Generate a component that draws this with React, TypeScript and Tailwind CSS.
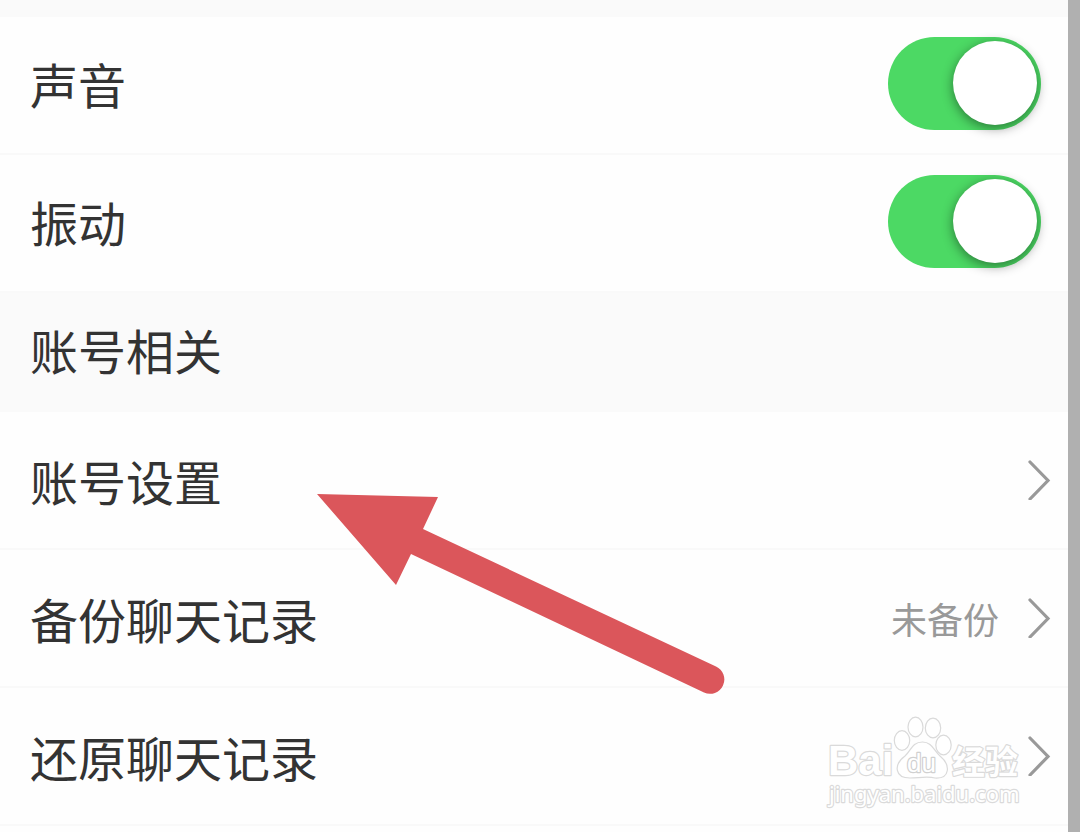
// Settings page: notification toggles and account entries.

import type { ReactNode } from "react";

function Chevron() {
  return (
    <svg className="h-10 w-6 shrink-0" viewBox="0 0 24 40" fill="none" aria-hidden="true">
      <path
        d="M3 2 L21 20.5 L3 39"
        stroke="#999999"
        strokeWidth="3.2"
        strokeLinecap="round"
        strokeLinejoin="miter"
      />
    </svg>
  );
}

function ToggleRow({ id, label }: { id: string; label: string }) {
  return (
    <div className="flex h-[138px] items-center justify-between border-b-2 border-[#f9f9f9] pb-1 pr-[27px] pl-[30px]">
      <label htmlFor={id} className="text-5xl">
        {label}
      </label>
      <input
        id={id}
        type="checkbox"
        defaultChecked
        className="flex h-[93px] w-[153px] shrink-0 cursor-pointer appearance-none items-center overflow-visible rounded-full bg-[#d9d9d9] px-1 before:size-[84px] before:rounded-full before:bg-white before:shadow-[0_3px_12px_rgba(0,0,0,0.45)] checked:justify-end checked:bg-[#4cd964]"
      />
    </div>
  );
}

function LinkRow({ label, value, children }: { label: string; value?: string; children?: ReactNode }) {
  return (
    <div className="relative border-b-2 border-[#f9f9f9]">
      <button type="button" className="flex h-[136px] w-full items-center pr-[17px] pl-[30px] text-left">
        <span className="flex-1 text-5xl">{label}</span>
        {value && <span className="mr-7 text-4xl text-[#999999]">{value}</span>}
        <Chevron />
      </button>
      {children}
    </div>
  );
}

function Pointer() {
  return (
    <svg
      className="pointer-events-none absolute top-20 left-[316px] z-10 h-[204px] w-[410px]"
      viewBox="0 0 410 204"
      aria-hidden="true"
    >
      <path
        d="M1 2 L122 5 L107 37 L400 174.5 A14 14 0 0 1 388 200.5 L95 62 L80 93 Z"
        fill="#db565b"
      />
    </svg>
  );
}

function Watermark() {
  return (
    <svg
      className="pointer-events-none absolute top-6 right-10 h-[100px] w-[204px]"
      viewBox="0 0 204 100"
      fill="#ffffff"
      stroke="#dadada"
      strokeWidth="1.2"
      strokeLinejoin="round"
      aria-hidden="true"
    >
      <ellipse cx="78" cy="28.5" rx="7.7" ry="9.8" />
      <ellipse cx="91.5" cy="15" rx="7.5" ry="9.8" />
      <ellipse cx="109" cy="16" rx="7.7" ry="9.8" />
      <ellipse cx="119.5" cy="33" rx="7.7" ry="9.8" />
      <path d="M98.5 30 C88 30 87 39 81 44 C69 53 71 66 86 66 C94 66 104 64 111 66 C126 67 127 53 116 44 C110 39 108 30 98.5 30 Z" />
      <g fontFamily="Liberation Sans, sans-serif" paintOrder="stroke">
        <text x="4" y="63" fontSize="42" fontWeight="700" strokeWidth="2.4">
          Bai
        </text>
        <text x="83" y="60" fontSize="26" stroke="#d0d0d0" strokeWidth="2.4">
          du
        </text>
        <text x="128" y="62" fontSize="33" fontWeight="700" fontFamily="Noto Sans CJK SC, sans-serif" strokeWidth="2.4">
          经验
        </text>
        <text x="5" y="90" fontSize="22" fontFamily="Noto Sans, sans-serif" strokeWidth="2.4">
          jingyan.baidu.com
        </text>
      </g>
    </svg>
  );
}

export default function App() {
  return (
    <main className="min-h-screen overflow-hidden border-r-12 border-[#b0b0b0] bg-[#fefefe] font-['Noto_Sans_CJK_SC',sans-serif] text-[#333333]">
      <div className="h-[17px] bg-[#fafafa]" />
      <section>
        <ToggleRow id="sound" label="声音" />
        <ToggleRow id="vibrate" label="振动" />
      </section>
      <section>
        <h2 className="flex h-[119px] items-center bg-[#fafafa] pb-2 pl-[30px] text-5xl">账号相关</h2>
        <LinkRow label="账号设置">
          <Pointer />
        </LinkRow>
        <LinkRow label="备份聊天记录" value="未备份" />
        <LinkRow label="还原聊天记录">
          <Watermark />
        </LinkRow>
      </section>
    </main>
  );
}
